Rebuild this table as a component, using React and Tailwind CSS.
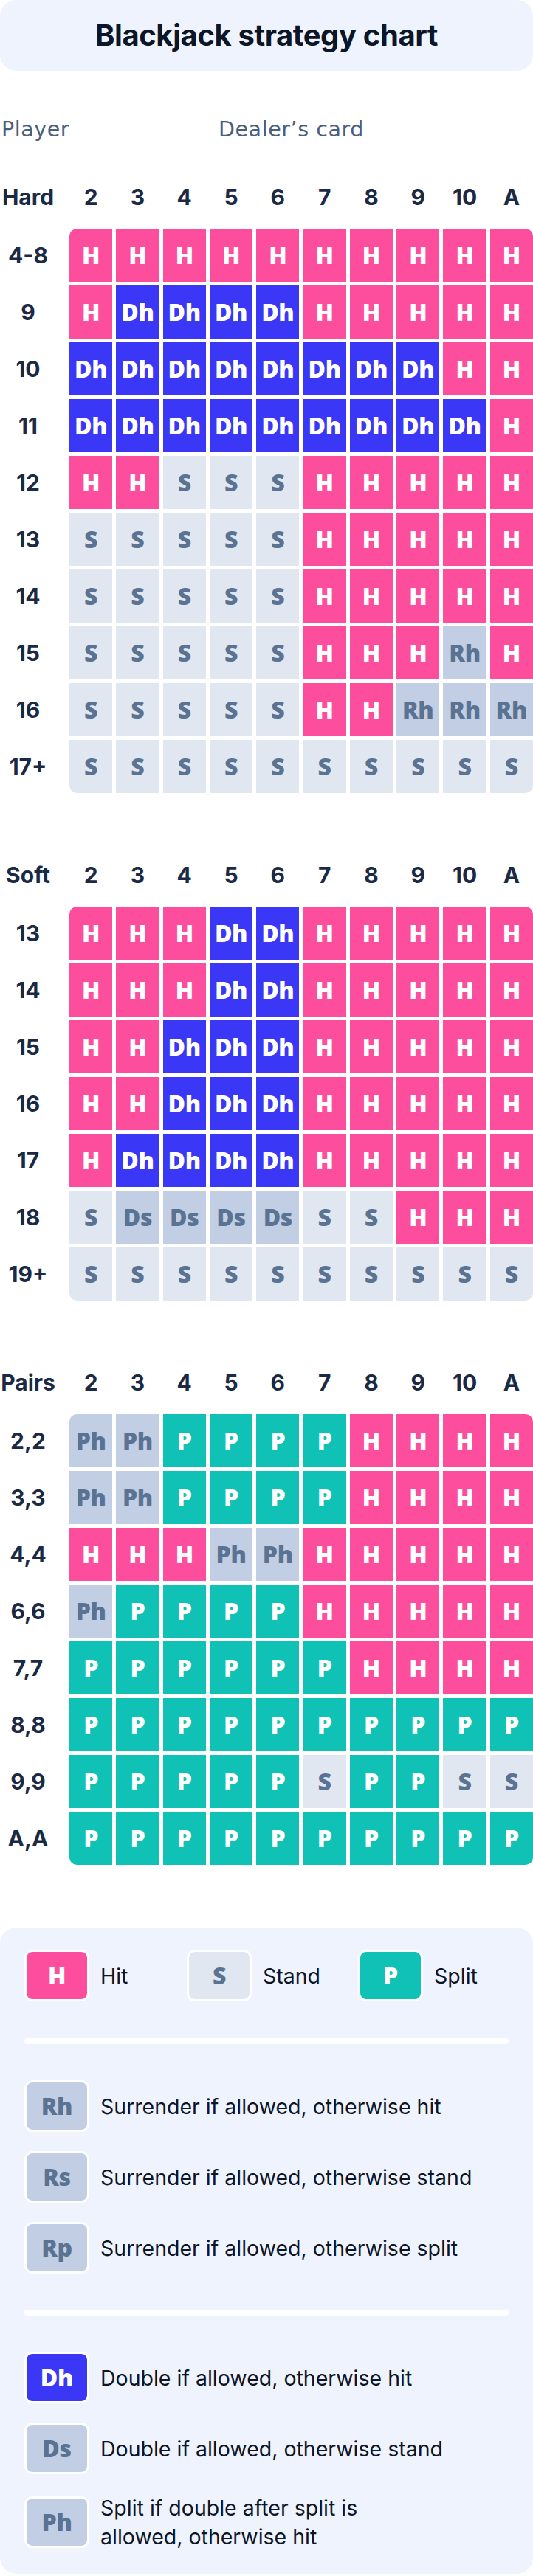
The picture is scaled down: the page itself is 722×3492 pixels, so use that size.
const DEALER = ["2", "3", "4", "5", "6", "7", "8", "9", "10", "A"];

const HARD = [
  ["4-8", "H H H H H H H H H H"],
  ["9", "H Dh Dh Dh Dh H H H H H"],
  ["10", "Dh Dh Dh Dh Dh Dh Dh Dh H H"],
  ["11", "Dh Dh Dh Dh Dh Dh Dh Dh Dh H"],
  ["12", "H H S S S H H H H H"],
  ["13", "S S S S S H H H H H"],
  ["14", "S S S S S H H H H H"],
  ["15", "S S S S S H H H Rh H"],
  ["16", "S S S S S H H Rh Rh Rh"],
  ["17+", "S S S S S S S S S S"],
];

const SOFT = [
  ["13", "H H H Dh Dh H H H H H"],
  ["14", "H H H Dh Dh H H H H H"],
  ["15", "H H Dh Dh Dh H H H H H"],
  ["16", "H H Dh Dh Dh H H H H H"],
  ["17", "H Dh Dh Dh Dh H H H H H"],
  ["18", "S Ds Ds Ds Ds S S H H H"],
  ["19+", "S S S S S S S S S S"],
];

const PAIRS = [
  ["2,2", "Ph Ph P P P P H H H H"],
  ["3,3", "Ph Ph P P P P H H H H"],
  ["4,4", "H H H Ph Ph H H H H H"],
  ["6,6", "Ph P P P P H H H H H"],
  ["7,7", "P P P P P P H H H H"],
  ["8,8", "P P P P P P P P P P"],
  ["9,9", "P P P P P S P P S S"],
  ["A,A", "P P P P P P P P P P"],
];

const CELL = {
  H: "bg-[#fc4e9d] text-white",
  Dh: "bg-[#3a37f6] text-white",
  P: "bg-[#10c2b5] text-white",
  S: "bg-[#e1e7f1] text-[#5a7393]",
  Rh: "bg-[#c2cee3] text-[#5a7393]",
  Rs: "bg-[#c2cee3] text-[#5a7393]",
  Rp: "bg-[#c2cee3] text-[#5a7393]",
  Ds: "bg-[#c2cee3] text-[#5a7393]",
  Ph: "bg-[#c2cee3] text-[#5a7393]",
};

function Section({ title, rows, className }) {
  return (
    <div className={className}>
      <div className="flex h-[46px] items-center font-['Inter',sans-serif] text-[30px] font-bold leading-none text-[#1b2a44]">
        <div className="w-[76px] text-center">{title}</div>
        <div className="ml-[18px] grid flex-1 grid-cols-10 gap-x-[5px]">
          {DEALER.map((d) => (
            <div key={d} className="text-center">
              {d}
            </div>
          ))}
        </div>
      </div>
      <div className="mt-[20px] flex">
        <div className="flex w-[76px] flex-col gap-y-[5px] font-['Inter',sans-serif] text-[30px] font-bold leading-none text-[#1b2a44]">
          {rows.map(([label]) => (
            <div key={label} className="flex h-[72px] items-center justify-center">
              {label}
            </div>
          ))}
        </div>
        <div className="ml-[18px] grid flex-1 grid-cols-10 gap-[5px] overflow-hidden rounded-[10px]">
          {rows.map(([label, codes]) =>
            codes.split(" ").map((c, i) => (
              <div
                key={label + i}
                className={
                  "flex h-[72px] items-center justify-center font-['Open_Sans',sans-serif] text-[32px] font-extrabold leading-none tracking-[-0.01em] " +
                  CELL[c]
                }
              >
                {c}
              </div>
            ))
          )}
        </div>
      </div>
    </div>
  );
}

function Badge({ code }) {
  return (
    <div
      className={
        "flex h-[70px] w-[88px] shrink-0 items-center justify-center rounded-[11px] border-[3px] border-white font-['Open_Sans',sans-serif] text-[32px] font-extrabold leading-none tracking-[-0.01em] " +
        CELL[code]
      }
    >
      {code}
    </div>
  );
}

function Item({ code, children }) {
  return (
    <div className="flex items-center gap-[15px]">
      <Badge code={code} />
      <div className="font-['Inter',sans-serif] text-[28.5px] leading-[39px] text-[#0d1526]">{children}</div>
    </div>
  );
}

export default function App() {
  return (
    <div className="w-[722px] bg-white">
      <div className="flex h-[96px] items-center justify-center rounded-[22px] bg-[#eef3fe]">
        <h1 className="font-['Inter',sans-serif] text-[40px] font-bold leading-none tracking-[-0.01em] text-[#0b1628]">
          Blackjack strategy chart
        </h1>
      </div>

      <div className="mt-[60px] flex h-[40px] items-center font-['DejaVu_Sans',sans-serif] text-[28.5px] leading-none tracking-[0.02em] text-[#4a5f7c]">
        <div className="w-[296px] pl-[2px]">Player</div>
        <div>Dealer’s card</div>
      </div>

      <Section title="Hard" rows={HARD} className="mt-[48px]" />
      <Section title="Soft" rows={SOFT} className="mt-[88px]" />
      <Section title="Pairs" rows={PAIRS} className="mt-[88px]" />

      <div className="mt-[85px] rounded-[22px] bg-[#eef3fd] px-[33px] pb-[31px] pt-[30px]">
        <div className="grid grid-cols-[220px_232px_1fr]">
          <Item code="H">Hit</Item>
          <Item code="S">Stand</Item>
          <Item code="P">Split</Item>
        </div>

        <div className="mt-[50px] h-[8px] rounded-full bg-white" />

        <div className="mt-[49px] flex flex-col gap-[26px]">
          <Item code="Rh">Surrender if allowed, otherwise hit</Item>
          <Item code="Rs">Surrender if allowed, otherwise stand</Item>
          <Item code="Rp">Surrender if allowed, otherwise split</Item>
        </div>

        <div className="mt-[49px] h-[8px] rounded-full bg-white" />

        <div className="mt-[49px] flex flex-col gap-[26px]">
          <Item code="Dh">Double if allowed, otherwise hit</Item>
          <Item code="Ds">Double if allowed, otherwise stand</Item>
          <Item code="Ph">
            Split if double after split is
            <br />
            allowed, otherwise hit
          </Item>
        </div>
      </div>
    </div>
  );
}
